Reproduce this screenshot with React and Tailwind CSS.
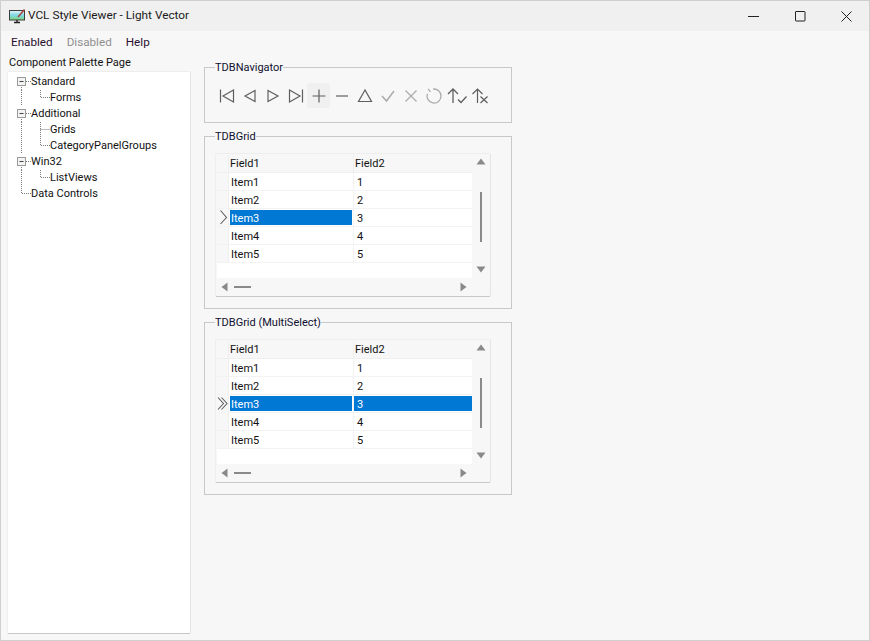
const ui = { fontFamily: 'Roboto, "Noto Sans", sans-serif' };

const Stroke = ({ c = '#666', w = 22, h = 22, children }) => (
  <svg width={w} height={h} viewBox="0 0 22 22" fill="none" stroke={c} strokeWidth="1.2" className="shrink-0">{children}</svg>
);

function NavButton({ active, children }) {
  return (
    <div className={`w-[23px] h-[25px] flex items-center justify-center rounded-[3px] ${active ? 'bg-[#f0f0f0]' : ''}`}>{children}</div>
  );
}

function Navigator() {
  const dark = '#5f5f5f';
  const off = '#ababab';
  return (
    <div className="flex pl-[10px] pt-[8px]">
      <NavButton><Stroke c={dark}><path d="M4.5 4.5v13M17.5 5v12L7 11z" /></Stroke></NavButton>
      <NavButton><Stroke c={dark}><path d="M16 5.5v11L6 11z" /></Stroke></NavButton>
      <NavButton><Stroke c={dark}><path d="M6 5.5v11L16 11z" /></Stroke></NavButton>
      <NavButton><Stroke c={dark}><path d="M17.5 4.5v13M4.5 5v12L15 11z" /></Stroke></NavButton>
      <NavButton active><Stroke c={dark}><path d="M11 4.5v13M4.5 11h13" /></Stroke></NavButton>
      <NavButton><Stroke c={dark}><path d="M5 11h12" /></Stroke></NavButton>
      <NavButton><Stroke c={dark}><path d="M11 5L4.5 16.5h13z" /></Stroke></NavButton>
      <NavButton><Stroke c={off}><path d="M5 11l4.5 5L17 6" strokeWidth="1.5" /></Stroke></NavButton>
      <NavButton><Stroke c={off}><path d="M5.5 5.5l11 11M16.5 5.5l-11 11" /></Stroke></NavButton>
      <NavButton><Stroke c={off}><path d="M10 4.1A7 7 0 1 1 4.4 8.8M5.2 3.8L7.4 6.8" strokeWidth="1.3" /></Stroke></NavButton>
      <NavButton><Stroke c={dark}><path d="M7 18V4M2 9L7 4 12 9M12 14.5l3 3 5.5-6" strokeWidth="1.3" /></Stroke></NavButton>
      <NavButton><Stroke c={dark}><path d="M8.5 18V4M3.5 9L8.5 4 13.5 9M11.5 11.5l7 6.5M18.5 11.5l-7 6.5" strokeWidth="1.2" /></Stroke></NavButton>
    </div>
  );
}

const Arrow = ({ d }) => (
  <svg width="12" height="12" viewBox="0 0 12 12" fill="#8a8a8a" className="shrink-0"><path d={d} /></svg>
);

function GridRow({ ind, a, b, selA, selB }) {
  return (
    <div className="flex h-[18px] border-b border-[#f3f3f3]">
      <div className="w-[12px] shrink-0 bg-[#f7f7f7] border-r border-[#efefef] flex items-center">
        {ind === 1 && (
          <svg width="11" height="17" viewBox="0 0 11 17" fill="none" stroke="#5f5f5f" strokeWidth="1.1" className="shrink-0">
            <path d="M3.5 1.5L9.5 8.5L3.5 15" />
          </svg>
        )}
        {ind === 2 && (
          <svg width="11" height="17" viewBox="0 0 11 17" fill="none" stroke="#5f5f5f" strokeWidth="1.1" className="shrink-0">
            <path d="M1 2.5L6.5 8.5L1 14.5M4.5 2.5L10 8.5L4.5 14.5" />
          </svg>
        )}
      </div>
      <div className="w-[125px] shrink-0 border-r border-[#f3f3f3] pl-px pt-px">
        <div className={`h-[15px] w-[122px] pl-px leading-[17px] ${selA ? 'bg-[#0078d4] text-white' : ''}`}>{a}</div>
      </div>
      <div className="flex-1 pt-px">
        <div className={`h-[15px] pl-[3px] leading-[17px] ${selB ? 'bg-[#0078d4] text-white' : ''}`}>{b}</div>
      </div>
    </div>
  );
}

function DBGrid({ multi }) {
  const rows = [1, 2, 3, 4, 5];
  return (
    <div className="ml-[10px] mt-[9px] w-[276px] h-[144px] border border-[#eeeeee] border-b-[#c8c8c8] border-r-[#e4e4e4] rounded-[2px] bg-[#f7f7f7] p-px flex flex-col">
      <div className="flex flex-1 min-h-0">
        <div className="w-[255px] bg-white flex flex-col">
          <div className="flex h-[18px] bg-[#f7f7f7] border-b border-[#efefef]">
            <div className="w-[12px] shrink-0 border-r border-[#efefef]" />
            <div className="w-[125px] shrink-0 border-r border-[#efefef] pl-px leading-[17px]">Field1</div>
            <div className="flex-1 pl-px leading-[17px]">Field2</div>
          </div>
          {rows.map((n) => (
            <GridRow
              key={n}
              a={`Item${n}`}
              b={n}
              ind={n === 3 ? (multi ? 2 : 1) : 0}
              selA={n === 3}
              selB={n === 3 && multi}
            />
          ))}
        </div>
        <div className="flex-1 flex flex-col items-center pt-px pb-[3px]">
          <Arrow d="M6 2.5L10.5 8.5H1.5z" />
          <div className="w-[2px] h-[50px] bg-[#8a8a8a] mt-[24px] ml-px" />
          <div className="flex-1" />
          <Arrow d="M1.5 3.5H10.5L6 9.5z" />
        </div>
      </div>
      <div className="h-[17px] flex items-center pl-[2px] pr-[20px]">
        <Arrow d="M8.5 1.5V10.5L2.5 6z" />
        <div className="w-[17px] h-[2px] bg-[#8a8a8a] ml-[3px]" />
        <div className="flex-1" />
        <Arrow d="M3.5 1.5V10.5L9.5 6z" />
      </div>
    </div>
  );
}

function Group({ title, size, children }) {
  return (
    <fieldset className={`w-[308px] border border-[#c8c8c8] ${size}`}>
      <legend className="ml-[10px] leading-[18px] h-[16px] text-[#101030]">{title}</legend>
      {children}
    </fieldset>
  );
}

function TreeLines({ level, kind }) {
  const dot = { stroke: '#7a7a7a', strokeDasharray: '1 1', strokeWidth: 1 };
  return (
    <svg width={level ? 42 : 23} height="16" viewBox={`0 0 ${level ? 42 : 23} 16`} fill="none" className="shrink-0">
      {kind === 'open' && (
        <>
          <path d="M13.5 11V16" {...dot} />
          <path d="M18 7.5H23" {...dot} />
          <rect x="9.5" y="3.5" width="8" height="8" fill="#f3f3f3" stroke="#9a9a9a" />
          <path d="M11.5 7.5H15.5" stroke="#444" />
        </>
      )}
      {kind === 'last' && <path d="M13.5 0V7.5H23" {...dot} />}
      {level === 1 && (
        <>
          <path d="M13.5 0V16" {...dot} />
          <path d={kind === 'lastChild' ? 'M32.5 0V7.5H42' : 'M32.5 0V16M32.5 7.5H42'} {...dot} />
        </>
      )}
    </svg>
  );
}

function TreeRow({ level = 0, kind, children }) {
  return (
    <div className="flex h-[16px] items-center whitespace-nowrap">
      <TreeLines level={level} kind={kind} />
      <span className="leading-[16px]">{children}</span>
    </div>
  );
}

function Tree() {
  return (
    <div className="w-[184px] flex-1 mb-[6px] ml-[6px] bg-white border border-[#eeeeee] border-b-[#c8c8c8] border-r-[#e4e4e4] rounded-[2px] pt-[2px]">
      <TreeRow kind="open">Standard</TreeRow>
      <TreeRow level={1} kind="lastChild">Forms</TreeRow>
      <TreeRow kind="open">Additional</TreeRow>
      <TreeRow level={1} kind="child">Grids</TreeRow>
      <TreeRow level={1} kind="lastChild">CategoryPanelGroups</TreeRow>
      <TreeRow kind="open">Win32</TreeRow>
      <TreeRow level={1} kind="lastChild">ListViews</TreeRow>
      <TreeRow kind="last">Data Controls</TreeRow>
    </div>
  );
}

function AppIcon() {
  return (
    <svg width="18" height="16" viewBox="0 0 18 16" className="shrink-0">
      <defs>
        <linearGradient id="scr" x1="0" y1="0" x2="0" y2="1">
          <stop offset="0" stopColor="#e8f4f4" />
          <stop offset="0.5" stopColor="#7fd8e8" />
          <stop offset="1" stopColor="#7ed67a" />
        </linearGradient>
      </defs>
      <rect x="0.5" y="2.5" width="15" height="9.5" fill="url(#scr)" stroke="#3c3c3c" />
      <path d="M5 14.5h6M8 12v2.5" stroke="#222" strokeWidth="1.4" />
      <path d="M9 9L15.5 1.5" stroke="#a8403c" strokeWidth="1.5" />
    </svg>
  );
}

export default function App() {
  return (
    <div style={ui} className="w-[870px] h-[641px] bg-[#f7f7f7] border border-[#cfcfcf] flex flex-col text-[11px] text-[#111] overflow-hidden">
      <div className="h-[30px] shrink-0 bg-[#f0f0f0] flex items-center">
        <div className="ml-[8px] mr-px flex items-center"><AppIcon /></div>
        <div className="flex-1 text-[11.8px] text-[#1a1a1a]">VCL Style Viewer - Light Vector</div>
        <div className="w-[46px] flex justify-center">
          <svg width="12" height="12" viewBox="0 0 12 12" fill="none" stroke="#222" className="shrink-0"><path d="M0 6.5H11" /></svg>
        </div>
        <div className="w-[46px] flex justify-center">
          <svg width="11" height="11" viewBox="0 0 11 11" fill="none" stroke="#222" className="shrink-0"><rect x="0.5" y="0.5" width="9.5" height="9.5" rx="0.5" /></svg>
        </div>
        <div className="w-[46px] flex justify-center">
          <svg width="11" height="11" viewBox="0 0 11 11" fill="none" stroke="#222" className="shrink-0"><path d="M0.5 0.5L10.5 10.5M10.5 0.5L0.5 10.5" /></svg>
        </div>
      </div>
      <div className="flex flex-1 min-h-0 flex-col">
        <div className="h-[19px] shrink-0 flex items-center pl-[10px] gap-[14px] text-[11.7px] mt-[2px]">
          <span className="text-[#2a1030]">Enabled</span>
          <span className="text-[#8f8f8f]">Disabled</span>
          <span className="text-[#2a1030]">Help</span>
        </div>
        <div className="flex flex-1 min-h-0">
          <div className="w-[203px] shrink-0 flex flex-col">
            <div className="h-[19px] pl-[8px] leading-[22px]">Component Palette Page</div>
            <Tree />
          </div>
          <div className="flex flex-col pt-[7px]">
            <Group title="TDBNavigator" size="h-[64px]"><Navigator /></Group>
            <div className="h-[5px]" />
            <Group title="TDBGrid" size="h-[181px]"><DBGrid /></Group>
            <div className="h-[5px]" />
            <Group title="TDBGrid (MultiSelect)" size="h-[181px]"><DBGrid multi /></Group>
          </div>
        </div>
      </div>
    </div>
  );
}
